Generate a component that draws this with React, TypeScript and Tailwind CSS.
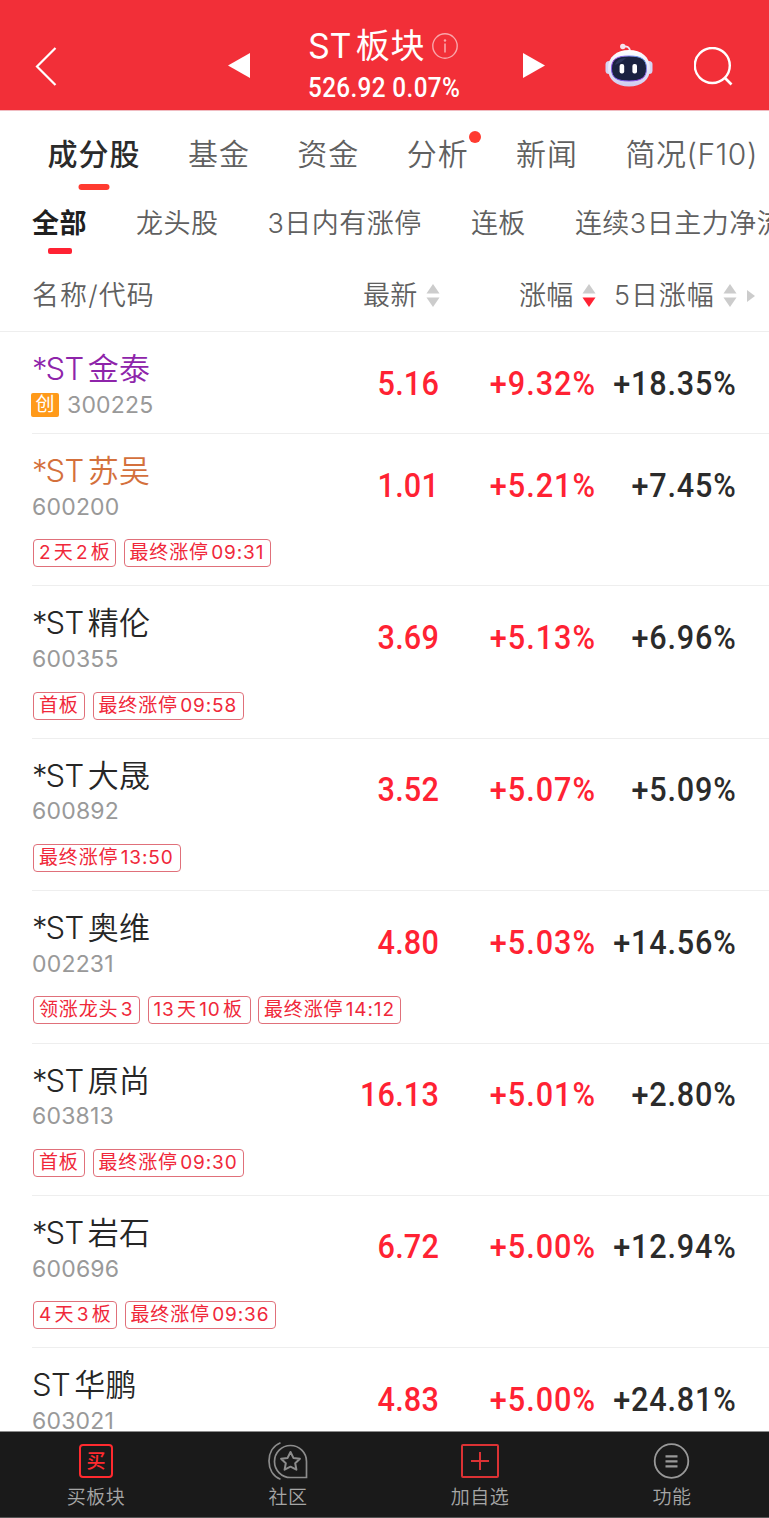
import clsx from 'clsx'

interface Tag {
  text: string
  width: string
}

interface Stock {
  name: string
  code: string
  price: string
  change: string
  fiveDay: string
  nameColor?: string
  isGem?: boolean
  tags?: Tag[]
}

const TABS = ['成分股', '基金', '资金', '分析', '新闻', '简况(F10)']

const FILTERS = ['全部', '龙头股', '3日内有涨停', '连板', '连续3日主力净流入']

const STOCKS: Stock[] = [
  {
    name: '*ST金泰',
    code: '300225',
    price: '5.16',
    change: '+9.32%',
    fiveDay: '+18.35%',
    nameColor: 'text-[#8e24aa]',
    isGem: true,
  },
  {
    name: '*ST苏吴',
    code: '600200',
    price: '1.01',
    change: '+5.21%',
    fiveDay: '+7.45%',
    nameColor: 'text-[#d4703c]',
    tags: [
      { text: '2天2板', width: 'w-[83px]' },
      { text: '最终涨停09:31', width: 'w-[147px]' },
    ],
  },
  {
    name: '*ST精伦',
    code: '600355',
    price: '3.69',
    change: '+5.13%',
    fiveDay: '+6.96%',
    tags: [
      { text: '首板', width: 'w-[52px]' },
      { text: '最终涨停09:58', width: 'w-[151px]' },
    ],
  },
  {
    name: '*ST大晟',
    code: '600892',
    price: '3.52',
    change: '+5.07%',
    fiveDay: '+5.09%',
    tags: [{ text: '最终涨停13:50', width: 'w-[148px]' }],
  },
  {
    name: '*ST奥维',
    code: '002231',
    price: '4.80',
    change: '+5.03%',
    fiveDay: '+14.56%',
    tags: [
      { text: '领涨龙头3', width: 'w-[107px]' },
      { text: '13天10板', width: 'w-[103px]' },
      { text: '最终涨停14:12', width: 'w-[143px]' },
    ],
  },
  {
    name: '*ST原尚',
    code: '603813',
    price: '16.13',
    change: '+5.01%',
    fiveDay: '+2.80%',
    tags: [
      { text: '首板', width: 'w-[52px]' },
      { text: '最终涨停09:30', width: 'w-[151px]' },
    ],
  },
  {
    name: '*ST岩石',
    code: '600696',
    price: '6.72',
    change: '+5.00%',
    fiveDay: '+12.94%',
    tags: [
      { text: '4天3板', width: 'w-[84px]' },
      { text: '最终涨停09:36', width: 'w-[151px]' },
    ],
  },
  {
    name: 'ST华鹏',
    code: '603021',
    price: '4.83',
    change: '+5.00%',
    fiveDay: '+24.81%',
    tags: [],
  },
]

const RobotIcon = () => (
  <svg className="w-12 h-12" viewBox="0 0 48 48" fill="none">
    <defs>
      <linearGradient id="shell" x1="0" y1="0" x2="0" y2="1">
        <stop offset="0" stopColor="#ffffff" />
        <stop offset="0.6" stopColor="#e4e2f6" />
        <stop offset="1" stopColor="#cfcbee" />
      </linearGradient>
      <linearGradient id="rim" x1="0" y1="1" x2="1" y2="0">
        <stop offset="0" stopColor="#6a5cf0" />
        <stop offset="0.5" stopColor="#a44be8" />
        <stop offset="1" stopColor="#55b4f5" />
      </linearGradient>
    </defs>
    <path d="M18 4.500c4-.8 6.500.8 7 4" stroke="#f3e9f6" strokeWidth="1.800" />
    <circle cx="17.800" cy="4.500" r="2.700" fill="#f6e4ee" />
    <rect x="0.500" y="19" width="7" height="13" rx="3.500" fill="#d6d4f3" />
    <rect x="40.500" y="19" width="7" height="13" rx="3.500" fill="#d6d4f3" />
    <path
      d="M24 8c12.500 0 21 7 21 18.500S36.500 44.500 24 44.500 3 38 3 26.500 11.500 8 24 8z"
      fill="url(#shell)"
    />
    <path
      d="M24 14c12 0 17.500 3 17.500 12.500S36 39 24 39 6.500 36 6.500 26.500 12 14 24 14z"
      fill="#1b2240"
      stroke="url(#rim)"
      strokeWidth="1"
    />
    <path d="M10 23c1.500-5 5-6.500 11-7-3 3-6 5-11 7z" fill="#2c355a" />
    <rect x="14.600" y="22" width="4.600" height="9.500" rx="2" fill="#fff" />
    <rect x="27.400" y="22" width="4.600" height="9.500" rx="2" fill="#fff" />
  </svg>
)

const SortIcon = ({ desc = false }: { desc?: boolean }) => (
  <svg className="w-3.5 h-[23px]" viewBox="0 0 14 23">
    <path d="M7 0l6.500 9.500H.5z" fill="#cccccc" />
    <path d="M7 23l6.500-9.500H.5z" fill={desc ? '#ff2233' : '#cccccc'} />
  </svg>
)

const Header = () => (
  <header className="flex h-[111px] shrink-0 text-white bg-[#f22f38] border-b border-[#f0bcc2]">
    <svg className="w-6 h-10 ml-[35px] mt-[47px]" viewBox="0 0 24 40" fill="none">
      <path d="M20.500 1L2 19.500 20.500 38" stroke="#fff" strokeWidth="2.200" />
    </svg>
    <svg className="w-[22px] h-[25px] ml-[169px] mt-[53px]" viewBox="0 0 22 25">
      <path d="M22 0v25L0 12.500z" fill="#fff" />
    </svg>
    <div className="w-[153px] ml-[58px] mt-[26px]">
      <div className="flex items-center h-10">
        <h1 className="text-[34px] leading-10 tracking-[0.800px] whitespace-nowrap [text-autospace:normal]">
          <span className="tracking-[-0.200px]">ST</span>板块
        </h1>
        <svg className="w-[26px] h-[26px] ml-[7px] shrink-0" viewBox="0 0 26 26" fill="none">
          <circle cx="13" cy="13" r="12.200" stroke="#f9a6aa" strokeWidth="1.400" />
          <path d="M13 10.500v9" stroke="#f9a6aa" strokeWidth="1.600" />
          <circle cx="13" cy="7.500" r="1.200" fill="#f9a6aa" />
        </svg>
      </div>
      <p className="mt-[6px] font-['Roboto'] text-[27px] leading-8 font-medium tracking-[0.4px] whitespace-nowrap origin-left scale-x-90">
        526.92 0.07%
      </p>
    </div>
    <svg className="w-[22px] h-[25px] ml-[62px] mt-[53px]" viewBox="0 0 22 25">
      <path d="M0 0v25l22-12.500z" fill="#fff" />
    </svg>
    <div className="ml-[60px] mt-[42px]">
      <RobotIcon />
    </div>
    <svg className="w-10 h-10 ml-[41px] mt-[47px]" viewBox="0 0 40 40" fill="none">
      <circle cx="18.300" cy="18.500" r="17.500" stroke="#fff" strokeWidth="2.400" />
      <path d="M30.500 30.500l7 7" stroke="#fff" strokeWidth="2.600" />
    </svg>
  </header>
)

const Tabs = () => (
  <nav className="flex h-[84px] shrink-0 gap-[47.400px] pl-[47.500px] pt-[20px] text-[30px] leading-[46px] tracking-[1px] font-[350] text-[#606060]">
    {TABS.map((tab, i) => (
      <div
        key={tab}
        className={clsx(
          'relative h-[46px] whitespace-nowrap',
          i === 0 && 'font-medium text-[#2b2b2b]',
          i === 5 && 'tracking-[0.500px]'
        )}
      >
        {tab}
        {i === 0 && (
          <div className="absolute w-[31px] h-[6px] -translate-x-1/2 left-[46.500px] top-[53px] rounded-full bg-[#ff3b30]"></div>
        )}
        {tab === '分析' && (
          <div className="absolute w-3 h-3 rounded-full -right-[12px] top-0 bg-[#ff3b30]"></div>
        )}
      </div>
    ))}
  </nav>
)

const Filters = () => (
  <nav className="flex h-[65px] shrink-0 gap-[49px] pl-8 pt-[9px] text-[27px] leading-10 tracking-[0.5px] font-[350] text-[#606060] overflow-hidden">
    {FILTERS.map((filter, i) => (
      <div
        key={filter}
        className={clsx(
          'relative h-10 whitespace-nowrap',
          i === 0 && 'font-bold text-[#1f1f1f]'
        )}
      >
        {filter}
        {i === 0 && (
          <div className="absolute w-6 h-[6px] left-4 top-[43.500px] rounded-[2px] bg-[#ff2233]"></div>
        )}
      </div>
    ))}
  </nav>
)

const ColumnHeader = () => (
  <div className="flex items-center h-[72px] shrink-0 pl-8 pr-[14px] text-[27px] leading-10 tracking-[0.3px] font-[350] text-[#606060] border-b border-[#eeeeee] whitespace-nowrap">
    <p className="w-[331px] tracking-[1.100px]">名称/代码</p>
    <div className="flex items-center w-[156px] gap-2">
      <p>最新</p>
      <SortIcon />
    </div>
    <div className="flex items-center w-[95px] gap-2">
      <p>涨幅</p>
      <SortIcon desc />
    </div>
    <div className="flex items-center gap-2">
      <p className="tracking-[0.900px]">5日涨幅</p>
      <SortIcon />
    </div>
    <svg className="w-2 h-3 ml-auto shrink-0" viewBox="0 0 8 12">
      <path d="M0 0v12l8-6z" fill="#cccccc" />
    </svg>
  </div>
)

const StockName = ({ name }: { name: string }) => {
  const starred = name.startsWith('*')

  return (
    <>
      {starred && <span className="tracking-[-2px]">*</span>}
      <span className="tracking-[-0.500px]">ST</span>
      {name.replace(/^\*?ST/, '')}
    </>
  )
}

const StockRow = ({ stock }: { stock: Stock }) => (
  <div
    className={clsx(
      'ml-8 border-b border-[#eeeeee] shrink-0',
      stock.tags ? 'h-[152.400px]' : 'h-[102px]'
    )}
  >
    <div className="flex pr-[33px]">
      <div className="flex-1 pt-[20px]">
        <p
          className={clsx(
            'text-[31px] leading-[34px] tracking-[0.3px] font-[350] whitespace-nowrap [text-autospace:normal]',
            stock.nameColor ?? 'text-[#262626]'
          )}
        >
          <StockName name={stock.name} />
        </p>
        <div className="flex items-center h-7 mt-[4.600px]">
          {stock.isGem && (
            <div className="flex items-center justify-center w-[28px] h-6 -ml-px mr-2 text-[19px] leading-6 text-white rounded-[2px] bg-[#ff9a1a]">
              创
            </div>
          )}
          <p className="text-[23px] leading-7 tracking-[0.200px] text-[#999999]">
            {stock.code}
          </p>
        </div>
      </div>
      <div className="flex pt-[30.500px] font-['Roboto'] text-[34px] leading-10 font-medium text-right">
        <p className="w-[120px] origin-right scale-x-90 tracking-[0.200px] text-[#ff2233]">
          {stock.price}
        </p>
        <p className="w-[157px] origin-right scale-x-90 tracking-[1.100px] text-[#ff2233]">
          {stock.change}
        </p>
        <p className="w-[140.500px] origin-right scale-x-90 tracking-[0.900px] text-[#2b2b2b]">
          {stock.fiveDay}
        </p>
      </div>
    </div>
    {stock.tags && (
      <div className="flex gap-[7.500px] pl-px mt-[18.700px]">
        {stock.tags.map((tag) => (
          <div
            key={tag.text}
            className={clsx(
              'flex items-center pl-[5px] h-7 text-[19px] leading-6 tracking-[0.850px] whitespace-nowrap text-[#f0283a] border border-[#e0707a] rounded-[4px] [text-autospace:normal]',
              tag.width
            )}
          >
            {tag.text}
          </div>
        ))}
      </div>
    )}
  </div>
)

const BottomBar = () => (
  <footer className="grid h-[87px] shrink-0 grid-cols-4 pr-px bg-[#1a1a1a] border-y border-t-[#8c8c8c] border-b-[#555555] text-[19px] leading-7 tracking-[0.5px] font-[350] text-[#a6a6a6]">
    <div className="flex flex-col items-center pt-[9px]">
      <div className="flex items-center justify-center h-10">
        <div className="flex items-center justify-center w-[34px] h-[34px] text-[19px] font-medium leading-none tracking-normal text-[#ff2a2f] border-2 border-[#ff2a2f] rounded-[4px]">
          买
        </div>
      </div>
      <p className="mt-[3px]">买板块</p>
    </div>
    <div className="flex flex-col items-center pt-[9px]">
      <svg className="w-10 h-10" viewBox="0 0 40 40" fill="none" stroke="#8c8c8c" strokeWidth="1.700">
        <path d="M38.500 36.500V20.500A16 16 0 1 0 22.500 36.500z" />
        <path d="M12.500 1.800C4.500 5 1 12.500 1 20s3.500 15 11.500 18.200" />
        <path
          d="M22.500 11l2.900 5.900 6.500.9-4.700 4.500 1.200 6.400-5.900-3-5.900 3 1.200-6.400-4.700-4.500 6.500-.9z"
          strokeLinejoin="round"
          strokeWidth="2"
        />
      </svg>
      <p className="mt-[3px]">社区</p>
    </div>
    <div className="flex flex-col items-center pt-[9px]">
      <svg className="w-10 h-10" viewBox="0 0 40 40" fill="none" stroke="#dc3234" strokeWidth="2">
        <rect x="2" y="4" width="36" height="32" rx="1" />
        <path d="M20 11v18M11 20h18" />
      </svg>
      <p className="mt-[3px]">加自选</p>
    </div>
    <div className="flex flex-col items-center pt-[9px]">
      <svg className="w-10 h-10" viewBox="0 0 40 40" fill="none" stroke="#999999" strokeWidth="1.800">
        <circle cx="19.500" cy="20" r="16.800" />
        <path d="M13.500 15.300h12M13.500 20.300h12M13.500 25.300h12" strokeWidth="2.200" />
      </svg>
      <p className="mt-[3px]">功能</p>
    </div>
  </footer>
)

export default function App() {
  return (
    <div className="flex flex-col w-[769px] h-[1518px] overflow-hidden bg-white font-['Inter','Noto_Sans_CJK_SC',sans-serif]">
      <Header />
      <Tabs />
      <Filters />
      <ColumnHeader />
      <main className="flex flex-col flex-1 min-h-0 overflow-hidden">
        {STOCKS.map((stock) => (
          <StockRow key={stock.code} stock={stock} />
        ))}
      </main>
      <BottomBar />
    </div>
  )
}
